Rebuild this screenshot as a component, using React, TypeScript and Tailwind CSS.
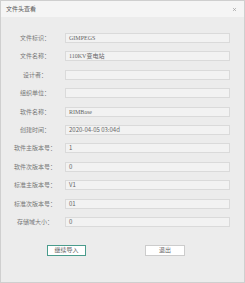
import { X } from 'lucide-react'

const rows: { label: string; value: string; serif?: boolean }[] = [
  { label: '文件标识：', value: 'GIMPEGS', serif: true },
  { label: '文件名称：', value: '110KV变电站', serif: true },
  { label: '设计者：', value: '' },
  { label: '组织单位：', value: '' },
  { label: '软件名称：', value: 'RIMBase', serif: true },
  { label: '创建时间：', value: '2020-04-05 03:04d' },
  { label: '软件主版本号：', value: '1' },
  { label: '软件次版本号：', value: '0' },
  { label: '标准主版本号：', value: 'V1' },
  { label: '标准次版本号：', value: '01' },
  { label: '存储域大小：', value: '0' },
]

export default function App() {
  return (
    <div
      className="w-[245px] h-[283px] bg-[#ececec] border border-[#cfcfcf] flex flex-col"
      style={{ fontFamily: '"Noto Sans CJK SC", "Noto Sans", sans-serif' }}
    >
      {/* Title bar */}
      <div className="h-[16px] bg-[#f5f5f5] flex items-center justify-between pl-[5px] pr-[7px] shrink-0">
        <span className="text-[6px] text-[#555] leading-none">文件头查看</span>
        <X className="w-[5px] h-[5px] text-[#999]" strokeWidth={3} />
      </div>

      {/* Form */}
      <div className="flex flex-col gap-[8.4px] pt-[16px] pr-[14px]">
        {rows.map((r) => (
          <div key={r.label} className="flex items-center h-[10px]">
            <div className="w-[64px] pl-[4px] text-center text-[6px] text-[#777] leading-none whitespace-nowrap">
              {r.label}
            </div>
            <div
              className="flex-1 h-[10px] bg-[#f2f2f2] border border-[#dadada] flex items-center pl-[3px] text-[6px] text-[#666] leading-none"
              style={r.serif ? { fontFamily: '"Liberation Serif", "Noto Sans CJK SC", serif' } : undefined}
            >
              {r.value}
            </div>
          </div>
        ))}
      </div>

      {/* Buttons */}
      <div className="flex pt-[18px] pl-[46px] gap-[59px]">
        <button className="w-[39px] h-[11px] bg-white border border-[#4a9c8c] text-[6px] text-[#666] leading-none flex items-center justify-center">
          继续导入
        </button>
        <button className="w-[40px] h-[11px] bg-white border border-[#cccccc] text-[6px] text-[#666] leading-none flex items-center justify-center">
          退出
        </button>
      </div>
    </div>
  )
}
